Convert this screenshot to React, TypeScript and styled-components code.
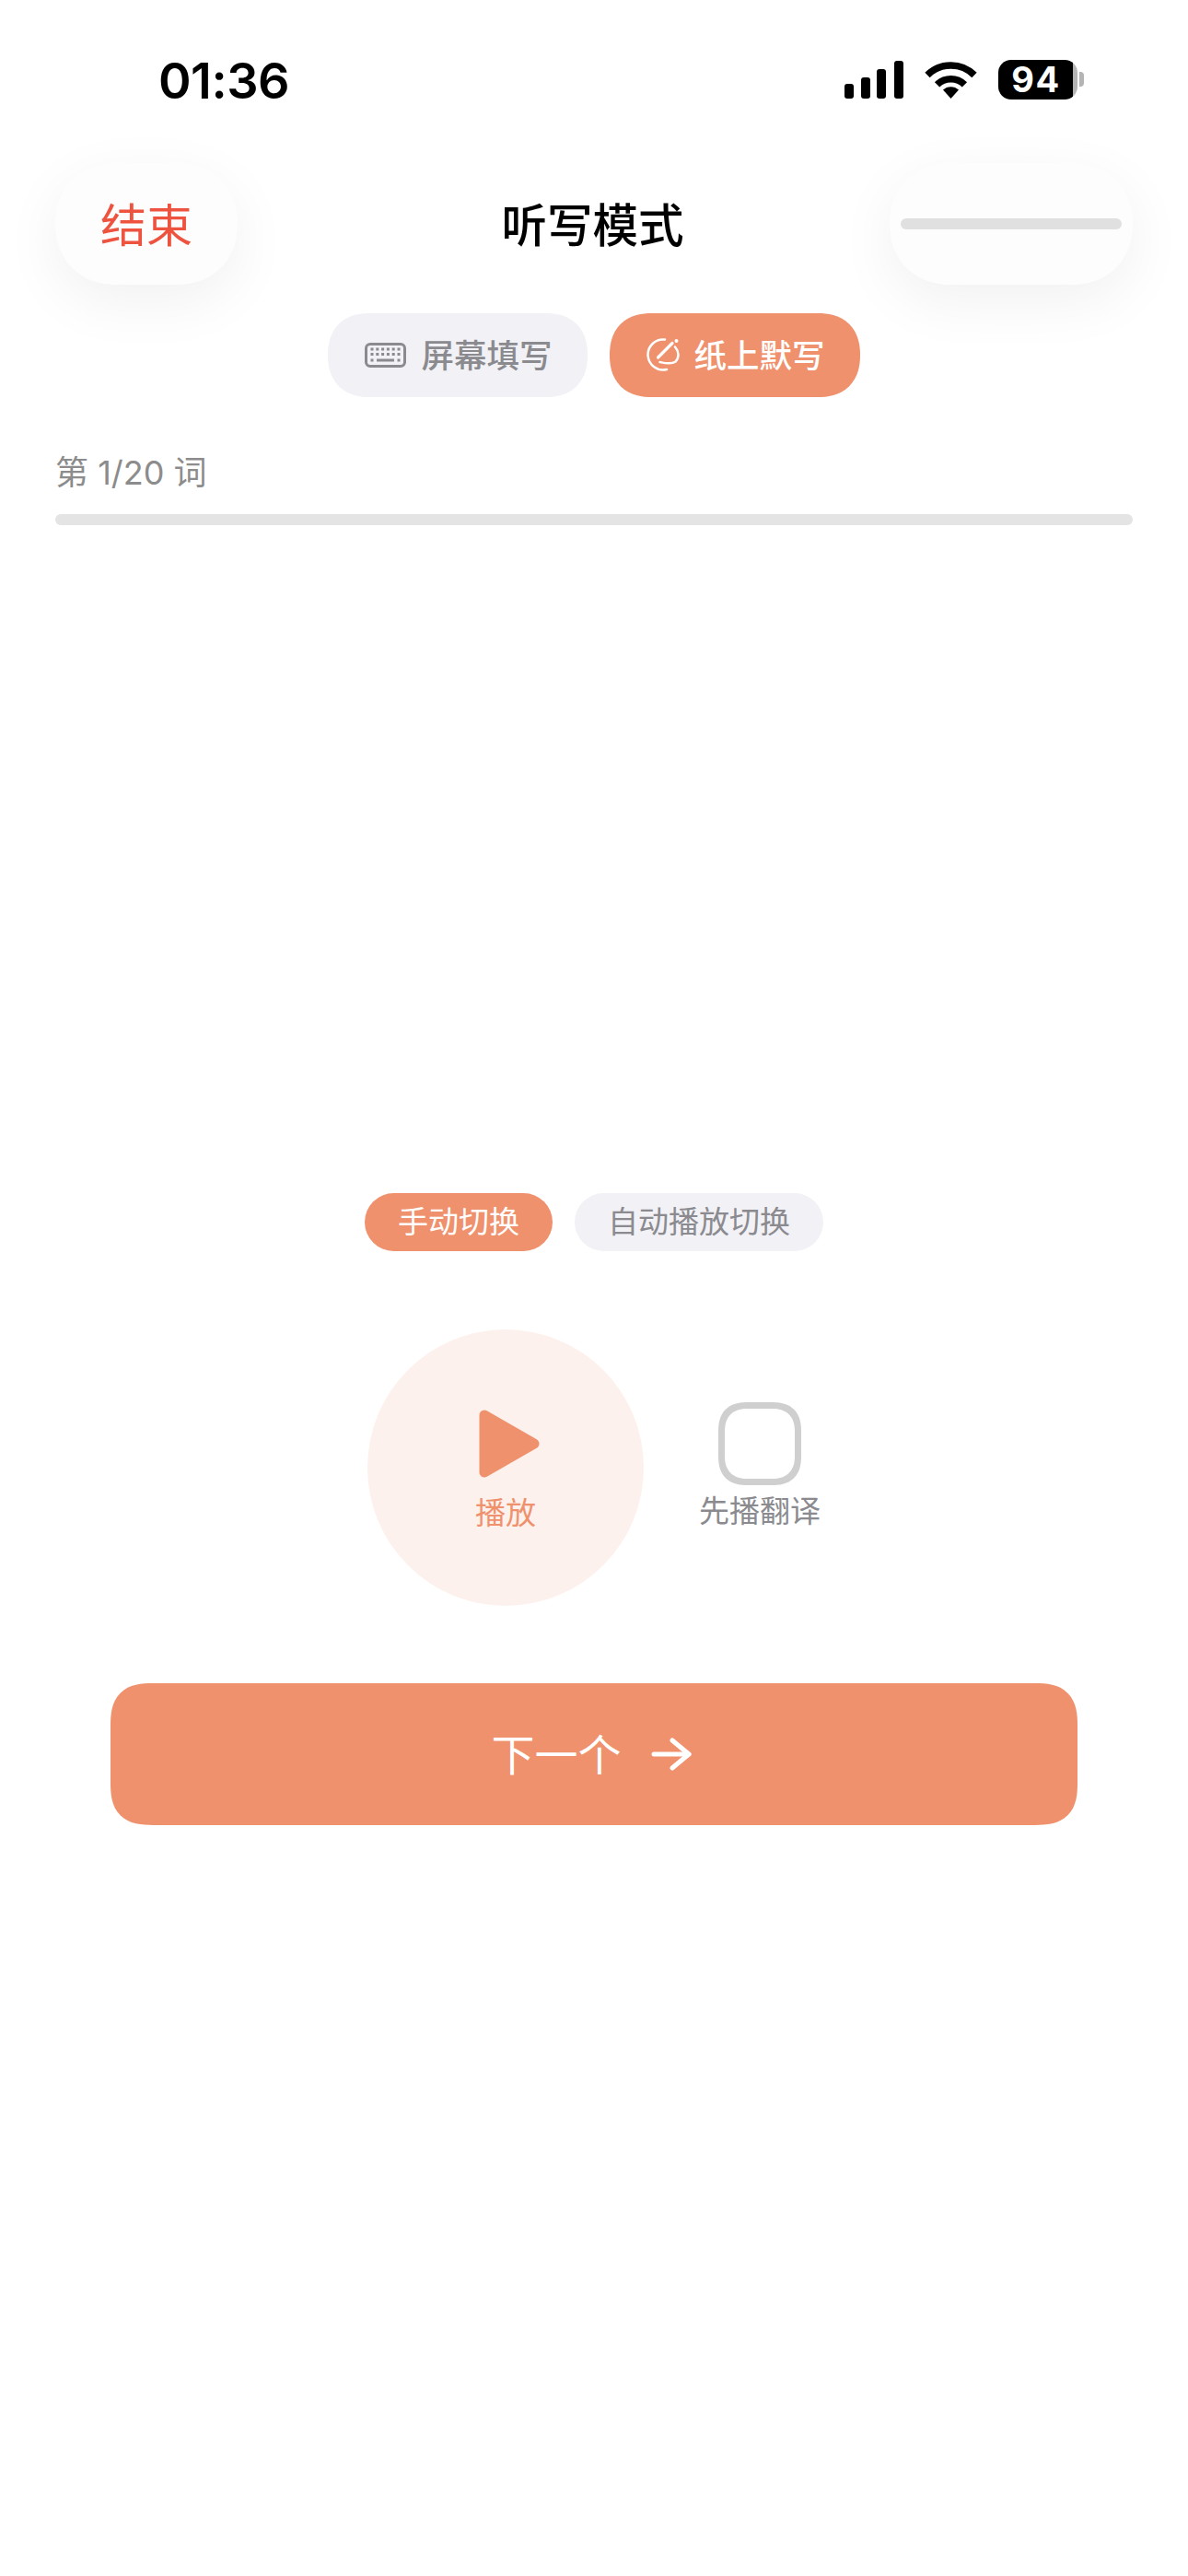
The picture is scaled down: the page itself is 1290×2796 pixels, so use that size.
import React from 'react'
import styled, { createGlobalStyle } from 'styled-components'

const ACCENT = '#ef916d'
const MUTED = '#8a8a8f'
const PILL = '#f1f1f6'

const GlobalStyle = createGlobalStyle`
  html, body {
    margin: 0;
    padding: 0;
    background: #fff;
  }
  body {
    font-family: Inter, "Noto Sans CJK SC", sans-serif;
  }
`

const Screen = styled.div`
  width: 1290px;
  height: 2796px;
  overflow: hidden;
  background: #fff;
`

const StatusBar = styled.div`
  height: 177px;
  box-sizing: border-box;
  padding: 64px 113px 0 172px;
  display: flex;
  justify-content: space-between;
  align-items: flex-start;
`

const Clock = styled.div`
  font-size: 54px;
  font-weight: 600;
  line-height: 48px;
  color: #000;
  letter-spacing: -0.5px;
`

const StatusIcons = styled.div`
  display: flex;
  align-items: center;
  gap: 23px;
  height: 44px;
`

const Battery = styled.div`
  display: flex;
  align-items: center;
  gap: 2px;
`

const BatteryBody = styled.div`
  width: 86px;
  height: 43px;
  border-radius: 14px;
  background: linear-gradient(to right, #000 94%, #b4b4b4 94%);
  display: flex;
  align-items: center;
  justify-content: center;
  padding-right: 4px;
  box-sizing: border-box;
  color: #fff;
  font-size: 38px;
  font-weight: 700;
  letter-spacing: 1.5px;
`

const BatteryCap = styled.div`
  width: 5px;
  height: 16px;
  border-radius: 0 4px 4px 0;
  background: #b4b4b4;
`

const NavBar = styled.div`
  padding: 0 60px;
  height: 132px;
  display: grid;
  grid-template-columns: 1fr auto 1fr;
  align-items: center;
`

const NavButton = styled.div<{ $wide?: boolean }>`
  justify-self: ${p => (p.$wide ? 'end' : 'start')};
  width: ${p => (p.$wide ? 264 : 198)}px;
  height: 132px;
  box-sizing: border-box;
  padding: 0 12px;
  border-radius: 66px;
  corner-shape: superellipse(1.1);
  background: #fdfdfd;
  box-shadow: 0 18px 64px rgba(0, 0, 0, 0.06);
  display: flex;
  align-items: center;
  justify-content: center;
`

const EndLabel = styled.span`
  font-size: 50px;
  padding-bottom: 5px;
  color: #ee5340;
`

const NavPlaceholder = styled.div`
  width: 100%;
  height: 12px;
  border-radius: 6px;
  background: #e0e0e0;
`

const Title = styled.h1`
  margin: 0 3px 0 0;
  padding-bottom: 4px;
  font-size: 49.5px;
  font-weight: 500;
  color: #000;
`

const ModeTabs = styled.div`
  margin-top: 31px;
  display: flex;
  justify-content: center;
  align-items: center;
  gap: 24px;
`

const ModeTab = styled.div<{ $active?: boolean }>`
  height: 91px;
  box-sizing: border-box;
  padding: 0 38px 0 ${p => (p.$active ? 38 : 40)}px;
  border-radius: 46px;
  corner-shape: superellipse(1.2);
  display: flex;
  align-items: center;
  gap: 16px;
  font-size: 35.5px;
  font-weight: 500;
  background: ${p => (p.$active ? ACCENT : PILL)};
  color: ${p => (p.$active ? '#fff' : MUTED)};
`

const ModeTabText = styled.span`
  padding-bottom: 5px;
`

const Progress = styled.div`
  margin-top: 60px;
  padding: 0 60px;
`

const ProgressLabel = styled.div`
  font-size: 36px;
  line-height: 44px;
  color: #8c8c8c;
`

const ProgressTrack = styled.div`
  margin-top: 23px;
  height: 12px;
  border-radius: 6px;
  background: #e4e4e4;
`

const SwitchRow = styled.div`
  margin-top: 725px;
  display: flex;
  justify-content: center;
  gap: 24px;
`

const SwitchPill = styled.div<{ $active?: boolean }>`
  height: 63px;
  box-sizing: border-box;
  padding: 0 36px 5px;
  border-radius: 32px;
  display: flex;
  align-items: center;
  font-size: 33px;
  background: ${p => (p.$active ? ACCENT : PILL)};
  color: ${p => (p.$active ? '#fff' : MUTED)};
`

const Controls = styled.div`
  margin-top: 85px;
  display: flex;
  justify-content: center;
  align-items: flex-start;
  gap: 60px;
`

const PlayCircle = styled.div`
  width: 300px;
  height: 300px;
  box-sizing: border-box;
  padding-top: 87px;
  border-radius: 50%;
  background: #fcf1ed;
  display: flex;
  flex-direction: column;
  align-items: center;
  gap: 18px;
`

const PlayIcon = styled.svg`
  margin-left: 8px;
  display: block;
`

const PlayLabel = styled.span`
  font-size: 33px;
  line-height: 40px;
  color: ${ACCENT};
`

const TranslateOption = styled.div`
  margin-top: 79px;
  display: flex;
  flex-direction: column;
  align-items: center;
  gap: 8px;
`

const CheckBox = styled.div`
  width: 90px;
  height: 90px;
  box-sizing: border-box;
  border: 7px solid #cfcfcf;
  border-radius: 32px;
  corner-shape: superellipse(1.3);
  background: #fff;
`

const OptionLabel = styled.span`
  font-size: 33px;
  line-height: 40px;
  color: ${MUTED};
`

const NextButton = styled.div`
  margin: 84px 120px 0;
  height: 154px;
  box-sizing: border-box;
  padding-right: 6px;
  border-radius: 46px;
  corner-shape: superellipse(1.4);
  background: ${ACCENT};
  display: flex;
  align-items: center;
  justify-content: center;
  gap: 32px;
  color: #fff;
  font-size: 47px;
`

const NextText = styled.span`
  padding-bottom: 6px;
`

function SignalIcon() {
  const bars = [
    { x: 0, y: 25, h: 16 },
    { x: 18, y: 18, h: 23 },
    { x: 35, y: 9, h: 32 },
    { x: 54, y: 0, h: 41 }
  ]
  return (
    <svg width="64" height="41" viewBox="0 0 64 41">
      {bars.map(b => (
        <rect key={b.x} x={b.x} y={b.y} width="10" height={b.h} rx="3" fill="#000" />
      ))}
    </svg>
  )
}

function WifiIcon() {
  return (
    <svg width="57" height="41" viewBox="0 0 57 41" fill="none" stroke="#000" strokeWidth="7.5">
      <path d="M3 15.5 A36 36 0 0 1 54 15.5" />
      <path d="M13.6 25.9 A21 21 0 0 1 43.4 25.9" />
      <path d="M20 31.5 L28.5 41 L37 31.5 A12.5 12.5 0 0 0 20 31.5 Z" fill="#000" stroke="none" />
    </svg>
  )
}

function KeyboardIcon() {
  const rows = [7, 12.5]
  const cols = [8, 13.8, 19.6, 25.4, 31.2, 37]
  return (
    <svg width="45" height="27" viewBox="0 0 45 27" fill={MUTED}>
      <rect x="1.5" y="1.5" width="42" height="24" rx="4.5" fill="none" stroke={MUTED} strokeWidth="3" />
      {rows.map(y => cols.map(x => <rect key={`${x}-${y}`} x={x - 1.5} y={y - 1.5} width="3" height="3" />))}
      <rect x="6.5" y="17.5" width="3" height="3" />
      <rect x="13" y="17.5" width="19" height="3" />
      <rect x="35.5" y="17.5" width="3" height="3" />
    </svg>
  )
}

function PenCircleIcon() {
  return (
    <svg width="38" height="38" viewBox="0 0 38 38" fill="none" stroke="#fff" strokeWidth="2.5" strokeLinecap="round">
      <path d="M22 1.6 A16.5 16.5 0 1 0 24 34" />
      <path d="M33 9.5 C37 14 38 21 33.5 25.5 C29 29 21 27 16.5 26" />
      <path d="M30 5.5 L14.5 21" strokeWidth="3.2" />
      <circle cx="34.5" cy="3" r="2" fill="#fff" stroke="none" />
    </svg>
  )
}

function ArrowIcon() {
  return (
    <svg width="44" height="36" viewBox="0 0 44 36" fill="none" stroke="#fff" strokeWidth="5" strokeLinecap="round" strokeLinejoin="round">
      <path d="M3 18 H41" />
      <path d="M23 3 L41 18 L23 33" />
    </svg>
  )
}

export default function App() {
  return (
    <>
      <GlobalStyle />
      <Screen>
        <StatusBar>
          <Clock>01:36</Clock>
          <StatusIcons>
            <SignalIcon />
            <WifiIcon />
            <Battery>
              <BatteryBody>94</BatteryBody>
              <BatteryCap />
            </Battery>
          </StatusIcons>
        </StatusBar>

        <NavBar>
          <NavButton>
            <EndLabel>结束</EndLabel>
          </NavButton>
          <Title>听写模式</Title>
          <NavButton $wide>
            <NavPlaceholder />
          </NavButton>
        </NavBar>

        <ModeTabs>
          <ModeTab>
            <KeyboardIcon />
            <ModeTabText>屏幕填写</ModeTabText>
          </ModeTab>
          <ModeTab $active>
            <PenCircleIcon />
            <ModeTabText>纸上默写</ModeTabText>
          </ModeTab>
        </ModeTabs>

        <Progress>
          <ProgressLabel>第 1/20 词</ProgressLabel>
          <ProgressTrack />
        </Progress>

        <SwitchRow>
          <SwitchPill $active>手动切换</SwitchPill>
          <SwitchPill>自动播放切换</SwitchPill>
        </SwitchRow>

        <Controls>
          <PlayCircle>
            <PlayIcon width="66" height="74" viewBox="0 0 66 74">
              <path d="M6 6 L60 37 L6 68 Z" fill={ACCENT} stroke={ACCENT} strokeWidth="11" strokeLinejoin="round" />
            </PlayIcon>
            <PlayLabel>播放</PlayLabel>
          </PlayCircle>
          <TranslateOption>
            <CheckBox />
            <OptionLabel>先播翻译</OptionLabel>
          </TranslateOption>
        </Controls>

        <NextButton>
          <NextText>下一个</NextText>
          <ArrowIcon />
        </NextButton>
      </Screen>
    </>
  )
}
